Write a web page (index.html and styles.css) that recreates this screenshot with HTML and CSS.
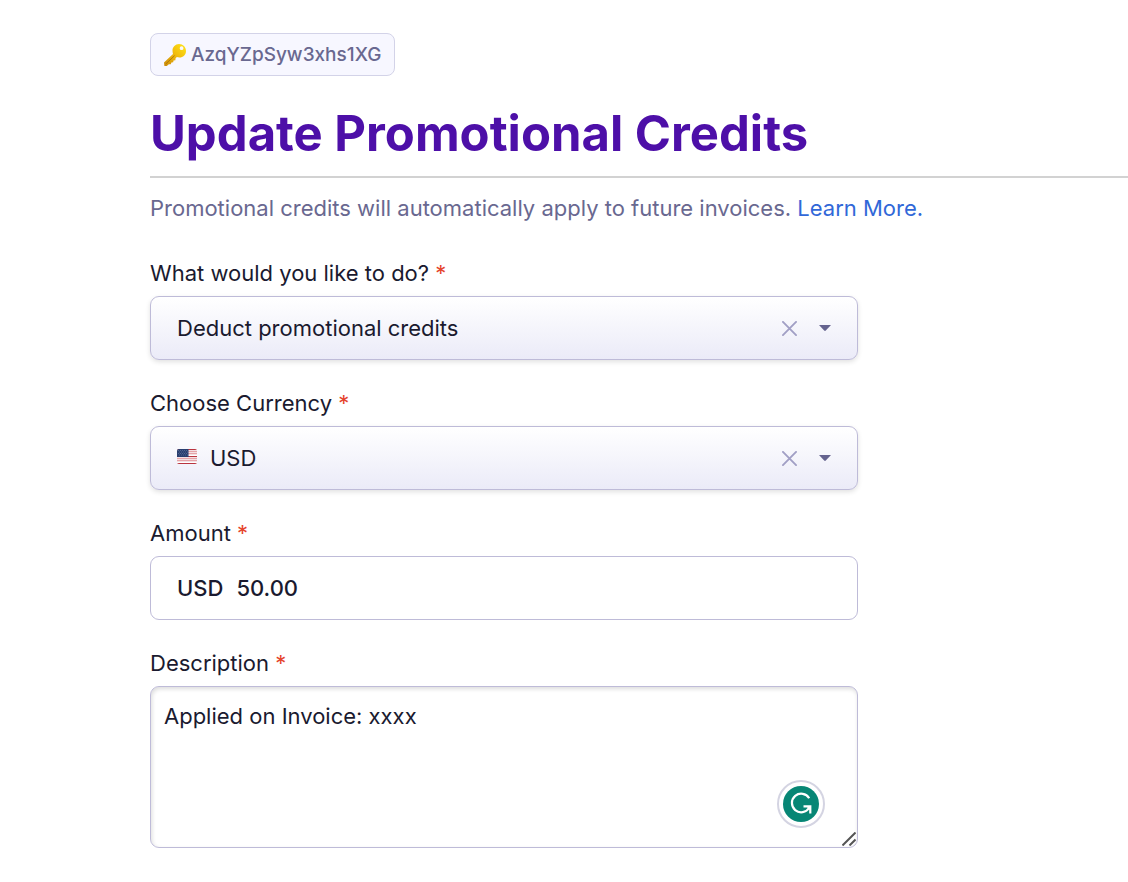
FILE: index.html
```html
<!DOCTYPE html>
<html lang="en">
<head>
  <meta charset="utf-8">
  <title>Update Promotional Credits</title>
  <link rel="stylesheet" href="styles.css">
</head>
<body>
  <main class="page">
    <div class="key-badge">
      <svg class="key-icon" viewBox="0 0 22 22" aria-hidden="true">
        <defs>
          <linearGradient id="gold" x1="1" y1="0" x2="0" y2="1">
            <stop offset="0" stop-color="#ffe61a"/>
            <stop offset="0.45" stop-color="#f2bd0b"/>
            <stop offset="1" stop-color="#c98a0a"/>
          </linearGradient>
        </defs>
        <path fill="url(#gold)" fill-rule="evenodd" d="M15 0C19 0 22 3 22 7s-3 6.500-6.500 6.500c-1 0-1.900-.2-2.700-.5L11.500 14.500 11.400 16.300 9.500 16.500 9.200 18.300 7.400 18.500 6.800 20.200 4.800 20.300 2.800 22 0.400 22 0 18.600 9 10C8.700 9 8.500 8 8.500 6.600 8.500 3 11.400 0 15 0ZM17.600 2.300a1.900 1.900 0 1 0 0 3.800 1.900 1.900 0 0 0 0-3.800Z"/>
        <path fill="none" stroke="#a86d08" stroke-width="0.800" d="M1.800 20 10.600 11.600"/>
      </svg>
      <span>AzqYZpSyw3xhs1XG</span>
    </div>

    <h1>Update Promotional Credits</h1>
    <p class="intro">Promotional credits will automatically apply to future invoices. <a href="#">Learn More.</a></p>

    <form class="credits-form">
      <div class="form-group">
        <label for="action">What would you like to do? <span class="required">*</span></label>
        <div class="control select-box">
          <select id="action">
            <option>Deduct promotional credits</option>
            <option>Add promotional credits</option>
          </select>
          <button type="button" class="btn-clear" aria-label="Clear action">
            <svg viewBox="0 0 16 16"><path d="M1 1 15 15M15 1 1 15"/></svg>
          </button>
          <svg class="caret" viewBox="0 0 12 6" aria-hidden="true"><path d="M0 0H12L6.800 5.600Q6 6.300 5.200 5.600Z"/></svg>
        </div>
      </div>

      <div class="form-group">
        <label for="currency">Choose Currency <span class="required">*</span></label>
        <div class="control select-box">
          <svg class="flag" viewBox="0 0 20 15" aria-hidden="true">
            <path fill="#f3dfe2" d="M0 0H20V15H0Z"/>
            <path fill="#e5a3a8" d="M0 2H20V3H0ZM0 4H20V5H0ZM0 9H20V10H0ZM0 11H20V12H0Z"/>
            <path fill="#b9343f" d="M0 0H20V1H0ZM0 7H20V8H0ZM0 14H20V15H0Z"/>
            <path fill="#ffffff" d="M0 6H20V7H0ZM0 13H20V14H0Z"/>
            <path fill="#293f70" d="M0 0H11.500V8H0Z"/>
            <path stroke="#6f81a6" stroke-width="0.700" stroke-dasharray="0.8 1.200" d="M1 1.500H11M2 3H11M1 4.500H11M2 6H11"/>
          </svg>
          <select id="currency">
            <option>USD</option>
            <option>EUR</option>
            <option>GBP</option>
          </select>
          <button type="button" class="btn-clear" aria-label="Clear currency">
            <svg viewBox="0 0 16 16"><path d="M1 1 15 15M15 1 1 15"/></svg>
          </button>
          <svg class="caret" viewBox="0 0 12 6" aria-hidden="true"><path d="M0 0H12L6.800 5.600Q6 6.300 5.200 5.600Z"/></svg>
        </div>
      </div>

      <div class="form-group">
        <label for="amount">Amount <span class="required">*</span></label>
        <div class="control amount-box">
          <span>USD</span>
          <input type="text" id="amount" value="50.00">
        </div>
      </div>

      <div class="form-group">
        <label for="description">Description <span class="required">*</span></label>
        <div class="description-box">
          <textarea id="description" spellcheck="false">Applied on Invoice: xxxx</textarea>
          <button type="button" class="btn-grammar" aria-label="Check writing">
            <svg viewBox="0 0 36 36">
              <circle cx="18" cy="18" r="18" fill="#078675"/>
              <path fill="none" stroke="#fff" stroke-width="2.200" d="M26.200 12.200A9.300 9.300 0 1 0 26.200 21.800M20.500 20.300H27.300V27.500"/>
              <path fill="#fff" d="M23 20H28V25Z"/>
            </svg>
          </button>
          <svg class="grip" viewBox="0 0 14 14" aria-hidden="true"><path d="M0.500 13.500 13.500 0.500M7.500 13.500 13.500 7.500"/></svg>
        </div>
      </div>
    </form>
  </main>
</body>
</html>
```
FILE: styles.css
```css
* {
  box-sizing: border-box;
}

body {
  margin: 0;
  background-color: #fff;
  color: #1a1a2f;
  font-family: Inter, "Liberation Sans", sans-serif;
  font-size: 22px;
  line-height: 26px;
}

.page {
  padding: 33px 0 34px 150px;
}

.key-badge {
  display: flex;
  align-items: center;
  gap: 5px;
  width: fit-content;
  padding: 8px 13px;
  border: 1px solid #d3d3e8;
  border-radius: 8px;
  background-color: #f7f7ff;
  color: #696890;
  font-size: 19px;
  font-weight: 500;
  line-height: 25px;
}

.key-icon {
  width: 22px;
  height: 22px;
}

h1 {
  margin: 28px 0 0;
  padding-bottom: 12px;
  border-bottom: 2px solid #d2d2d2;
  color: #4d0fa8;
  font-size: 49px;
  font-weight: 700;
  line-height: 60px;
}

.intro {
  margin: 17px 0 39px;
  color: #696890;
}

.intro a {
  color: #3168d8;
  text-decoration: none;
}

.credits-form {
  max-width: 708px;
}

.form-group {
  margin-bottom: 30px;
}

.form-group:last-child {
  margin-bottom: 0;
}

label {
  display: block;
  margin-bottom: 10px;
}

.required {
  color: #e5432b;
}

.control {
  display: flex;
  align-items: center;
  height: 64px;
  padding: 0 26px;
  border: 1px solid #bebbd8;
  border-radius: 9px;
}

.select-box {
  background: linear-gradient(#fff, #ebebf8);
  box-shadow: 0 2px 5px rgba(0, 0, 0, 0.12);
}

select,
input,
textarea {
  min-width: 0;
  margin: 0;
  padding: 0;
  border: 0;
  outline: 0;
  background: none;
  color: inherit;
  font: inherit;
}

select {
  flex: 1;
  appearance: none;
}

.flag {
  width: 20px;
  height: 15px;
  margin: 0 13px 3px 0;
  border-radius: 2px;
}

.btn-clear {
  display: flex;
  margin-right: 22px;
  padding: 0;
  border: 0;
  background: none;
  cursor: pointer;
}

.btn-clear svg {
  width: 15px;
  height: 15px;
  fill: none;
  stroke: #a19fc5;
  stroke-width: 2;
  stroke-linecap: round;
}

.caret {
  width: 12px;
  height: 6px;
  fill: #65638f;
}

.amount-box {
  gap: 13px;
  font-weight: 500;
}

.amount-box input {
  flex: 1;
}

.description-box {
  position: relative;
}

textarea {
  display: block;
  width: 100%;
  height: 162px;
  padding: 16px 13px;
  border: 1px solid #bebbd8;
  border-radius: 9px;
  box-shadow: inset 1px 2px 4px rgba(0, 0, 0, 0.14);
  resize: none;
}

.btn-grammar {
  position: absolute;
  right: 33px;
  bottom: 20px;
  display: flex;
  padding: 4px;
  border: 2px solid #d4d4e2;
  border-radius: 50%;
  background-color: #fff;
  cursor: pointer;
}

.btn-grammar svg {
  width: 36px;
  height: 36px;
}

.grip {
  position: absolute;
  right: 2px;
  bottom: 2px;
  width: 14px;
  height: 14px;
  fill: none;
  stroke: #555;
  stroke-width: 2;
}
```
